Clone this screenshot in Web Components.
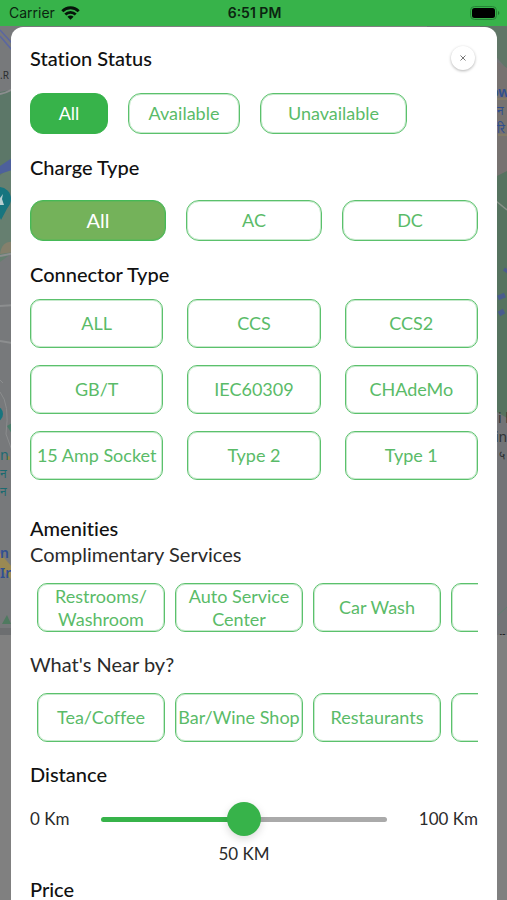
<!DOCTYPE html>
<html lang="en">
<head>
<meta charset="utf-8">
<meta name="viewport" content="width=device-width, initial-scale=1">
<title>Station filters</title>
<style>
	body {
		margin: 0;
		font-family: Lato, "Noto Sans", sans-serif;
		font-variant-ligatures: none;
		color: #111;
		background: #808080;
	}
</style>
</head>
<body>
<filter-screen></filter-screen>

<script>
function defineElement(name, html, setup) {
	const template = document.createElement('template');
	template.innerHTML = html;

	customElements.define(name, class extends HTMLElement {
		constructor() {
			super();
			const shadowRoot = this.attachShadow({ mode: "open" });
			shadowRoot.appendChild(template.content.cloneNode(true));
		}

		connectedCallback() {
			if (setup) setup(this, this.shadowRoot);
		}
	});
}

// green bar on top: carrier, clock, battery
defineElement('status-bar', `
<style>
	:host {
		display: grid;
		grid-template-columns: 1fr auto 1fr;
		align-items: center;
		height: 26px;
		padding: 0 7px 0 9px;
		background: #37b34a;
		color: #0b2410;
		font: 14px/26px Inter, sans-serif;
	}
	.carrier {
		display: flex;
		align-items: center;
		gap: 6px;
	}
	.time {
		font-weight: 600;
	}
	.battery {
		justify-self: end;
	}
	svg {
		display: block;
	}
</style>
<div class="carrier">
	<span>Carrier</span>
	<svg width="19" height="14" viewBox="0 0 19 14" fill="none" stroke="#06150a" stroke-width="2.8">
		<path d="M1.3 5.2C5.8 .6 13.2 .6 17.7 5.2"/>
		<path d="M4.3 8.5C7.2 5.6 11.8 5.6 14.7 8.5"/>
		<path d="M9.5 13.8 6.4 10.8C8.2 9.1 10.8 9.1 12.6 10.8Z" fill="#06150a" stroke="none"/>
	</svg>
</div>
<span class="time">6:51 PM</span>
<svg class="battery" width="30" height="14" viewBox="0 0 30 14">
	<rect x=".5" y=".5" width="26" height="13" rx="4" fill="none" stroke="#258436"/>
	<rect x="2" y="2" width="23" height="10" rx="2.5" fill="#000"/>
	<path d="M28 5v4c1.8-.6 1.8-3.4 0-4z" fill="#1f7a2d"/>
</svg>
`);

// the dimmed map that shows on both sides of the sheet
defineElement('map-backdrop', `
<style>
	:host {
		display: flex;
		justify-content: space-between;
		align-items: flex-start;
		background: #808080;
	}
	svg {
		display: block;
		font-family: "Noto Sans", sans-serif;
	}
</style>
<svg width="80" height="609" viewBox="0 26 80 609">
	<rect y="26" width="80" height="609" fill="#77797b"/>
	<path d="M0 92 30 86V150L0 176Z" fill="#5c7768"/>
	<path d="M0 176 30 146V240L0 262Z" fill="#667f70"/>
	<path d="M0 166 30 146V164L0 174Z" fill="#4d609c"/>
	<path d="M0 30 40 74M0 36 36 78" stroke="#5a66a2" stroke-width="1.5"/>
	<path d="M0 94Q12 92 20 82M0 256 30 250M0 306 30 304M0 341 30 346" stroke="#8c8e8f" fill="none" stroke-width="2"/>
	<path d="M0 254Q2 240 14 242V252Z" fill="#85806c"/>
	<circle cx="-1" cy="199" r="12" fill="#17757f"/>
	<path d="M-9 207Q0 217 1 220L9 205Z" fill="#17757f"/>
	<path d="M0 198 3 194 2 199 4 205H0Z" fill="#b8cfd2"/>
	<circle cx="-5" cy="414" r="8" fill="#17757f"/>
	<path d="M0 392Q10 404 6 434L14 456M0 380 3 383" stroke="#8b8d8e" fill="none"/>
	<path d="M7 426 12 423V434Z" fill="#4b7b69"/>
	<path d="M0 553 12 567V580L0 568Z" fill="#9a8953"/>
	<circle cx="8" cy="458" r="2" fill="#9a8147"/>
	<path d="M2 624 7 615 11 624Z" fill="#4f7a60"/>
	<rect y="628" width="80" height="7" fill="#6c6e70"/>
	<text x="0" y="79" font-size="10" fill="#2c2e30">.R</text>
	<text x="0" y="460" font-size="14" fill="#1c6a70">n</text>
	<text x="0" y="478" font-size="12" fill="#1c6a70">न</text>
	<text x="0" y="496" font-size="12" fill="#1c6a70">न</text>
	<text x="0" y="558" font-size="14" font-weight="600" fill="#314f91">n</text>
	<text x="0" y="578" font-size="14" font-weight="600" fill="#314f91">In</text>
</svg>
<svg width="80" height="609" viewBox="427 26 80 609">
	<rect x="427" y="26" width="80" height="609" fill="#737477"/>
	<path d="M480 26H507V70Q500 60 480 40Z" fill="#607667"/>
	<path d="M497 62 507 68V172L497 176Z" fill="#777270"/>
	<path d="M497 176 507 171V418L497 412Z" fill="#56735f"/>
	<path d="M496 201 507 210" stroke="#879187" stroke-width="1.5"/>
	<path d="M498 298 505 295M499 314 504 311M505 272 507 269" stroke="#4a5c8d" stroke-width="5"/>
	<path d="M498 615 507 607" stroke="#607f70"/>
	<path d="M497 99H507M498 135H507" stroke="#8e835d"/>
	<text x="490" y="97" font-size="14" font-weight="600" fill="#304f8f">ow</text>
	<text x="497" y="115" font-size="12" fill="#304f8f">न</text>
	<text x="497" y="133" font-size="12" fill="#304f8f">रि</text>
	<text x="498" y="423" font-size="14" fill="#303335">i l</text>
	<text x="495" y="442" font-size="14" fill="#303335">in</text>
	<text x="499" y="460" font-size="12" fill="#303335">५</text>
	<text x="499" y="642" font-size="14" font-weight="600" fill="#18191a">r</text>
</svg>
`);

// rounded toggle: variant attributes are "filled" and "muted"
defineElement('filter-chip', `
<style>
	:host {
		display: block;
		min-width: 0;
		--line: #5bc16c;
		--fill: #fff;
		--ink: #5abb68;
	}
	:host([filled]) {
		--line: #37b34a;
		--fill: #37b34a;
		--ink: #fff;
	}
	:host([muted]) {
		--line: #45b957;
		--fill: #74b25a;
		--ink: #fff;
		font-size: 20px;
	}
	button {
		display: block;
		box-sizing: border-box;
		width: 100%;
		height: var(--chip-height, 49px);
		padding: 0;
		border: 1px solid var(--line);
		outline: 1px solid color-mix(in srgb, var(--line) 35%, transparent);
		outline-offset: -2px;
		border-radius: var(--chip-radius, 10px);
		background: var(--fill);
		color: var(--ink);
		font: inherit;
		font-variant-ligatures: none;
		line-height: 23px;
		cursor: pointer;
	}
</style>
<button type="button"><slot></slot></button>
`, (host, root) => {
	const button = root.querySelector('button');
	button.setAttribute('aria-pressed', host.hasAttribute('filled') || host.hasAttribute('muted'));
	if (host.hasAttribute('label')) button.setAttribute('aria-label', host.getAttribute('label'));
});

// lays out the chips: layout is "status", "charge", "connector" or "scroll"
defineElement('chip-group', `
<style>
	:host {
		display: grid;
		grid-template-columns: repeat(3, 1fr);
		font-size: 18px;
	}
	:host([layout="status"]) {
		grid-template-columns: 78fr 112fr 147fr 51fr;
		gap: 20px;
		--chip-height: 41px;
		--chip-radius: 13px;
	}
	:host([layout="charge"]) {
		gap: 20px;
		--chip-height: 41px;
		--chip-radius: 13px;
	}
	:host([layout="connector"]) {
		gap: 17px 24px;
	}
	:host([layout="scroll"]) {
		grid-template-columns: none;
		grid-auto-flow: column;
		grid-auto-columns: 128px;
		gap: 10px;
		padding-left: 7px;
		overflow-x: auto;
		scrollbar-width: none;
	}
</style>
<slot></slot>
`);

defineElement('close-button', `
<style>
	:host {
		display: block;
	}
	button {
		display: grid;
		place-items: center;
		width: 24px;
		height: 24px;
		padding: 0;
		border: 0;
		border-radius: 50%;
		background: #fff;
		box-shadow: 0 1px 3px rgba(0, 0, 0, .3);
		cursor: pointer;
	}
</style>
<button type="button" aria-label="Close">
	<svg width="6" height="6" viewBox="0 0 6 6" stroke="#777" stroke-width="1">
		<path d="M.5 .5 5.5 5.5M5.5 .5 .5 5.5"/>
	</svg>
</button>
`);

defineElement('distance-slider', `
<style>
	:host {
		display: grid;
		grid-template-columns: 71px 1fr 91px;
		align-items: center;
		row-gap: 9px;
		color: #2b2b2b;
		font-size: 17px;
		line-height: 26px;
	}
	.max {
		text-align: right;
	}
	output {
		grid-column: 2;
		text-align: center;
	}
	input {
		appearance: none;
		width: 100%;
		height: 26px;
		margin: 0;
		background: transparent;
	}
	input::-webkit-slider-runnable-track {
		height: 5px;
		border-radius: 3px;
		background: linear-gradient(to right, #37b34a var(--value, 50%), #aaa var(--value, 50%));
	}
	input::-webkit-slider-thumb {
		appearance: none;
		width: 34px;
		height: 34px;
		margin-top: -15px;
		border-radius: 50%;
		background: #37b34a;
		box-shadow: 0 3px 8px rgba(0, 0, 0, .15);
	}
</style>
<span>0 Km</span>
<input id="distance" type="range" min="0" max="100" value="50" aria-label="Distance">
<span class="max">100 Km</span>
<output for="distance">50 KM</output>
`, (host, root) => {
	const input = root.querySelector('input');
	input.addEventListener('input', () => {
		input.style.setProperty('--value', input.value + '%');
		root.querySelector('output').textContent = input.value + ' KM';
	});
});

defineElement('filter-screen', `
<style>
	:host {
		display: grid;
		grid-template-rows: auto 1fr;
		height: 100vh;
		overflow: hidden;
	}
	status-bar {
		grid-area: 1 / 1;
	}
	map-backdrop, main {
		grid-area: 2 / 1;
		min-height: 0;
	}
	main {
		display: flex;
		flex-direction: column;
		z-index: 1;
		margin: 1px 10px 0 11px;
		padding: 18px 19px 0;
		overflow-y: auto;
		scrollbar-width: none;
		border-radius: 12px 12px 0 0;
		background: #fff;
	}
	main > * {
		flex: none;
	}
	header {
		display: flex;
		justify-content: space-between;
		align-items: center;
		padding-right: 3px;
	}
	h2, h3 {
		margin: 0;
		font-size: 20px;
		font-weight: 500;
		line-height: 26px;
	}
	h3 {
		font-weight: 400;
		color: #2b2b2b;
	}
	chip-group {
		margin: 20px 0;
	}
	chip-group[layout="status"] {
		margin-top: 22px;
	}
	chip-group[layout="connector"] {
		margin: 12px 0 35px;
	}
	chip-group[layout="scroll"] {
		margin: 16px 0 19px;
	}
	distance-slider {
		margin: 19px 0 9px;
	}
</style>
<status-bar></status-bar>
<map-backdrop aria-hidden="true"></map-backdrop>
<main>
	<header>
		<h2>Station Status</h2>
		<close-button></close-button>
	</header>
	<chip-group layout="status">
		<filter-chip filled>All</filter-chip>
		<filter-chip>Available</filter-chip>
		<filter-chip>Unavailable</filter-chip>
	</chip-group>
	<h2>Charge Type</h2>
	<chip-group layout="charge">
		<filter-chip muted>All</filter-chip>
		<filter-chip>AC</filter-chip>
		<filter-chip>DC</filter-chip>
	</chip-group>
	<h2>Connector Type</h2>
	<chip-group layout="connector">
		<filter-chip>ALL</filter-chip>
		<filter-chip>CCS</filter-chip>
		<filter-chip>CCS2</filter-chip>
		<filter-chip>GB/T</filter-chip>
		<filter-chip>IEC60309</filter-chip>
		<filter-chip>CHAdeMo</filter-chip>
		<filter-chip>15 Amp Socket</filter-chip>
		<filter-chip>Type 2</filter-chip>
		<filter-chip>Type 1</filter-chip>
	</chip-group>
	<h2>Amenities</h2>
	<h3>Complimentary Services</h3>
	<chip-group layout="scroll">
		<filter-chip>Restrooms/<br>Washroom</filter-chip>
		<filter-chip>Auto Service<br>Center</filter-chip>
		<filter-chip>Car Wash</filter-chip>
		<filter-chip label="More services"></filter-chip>
	</chip-group>
	<h3>What's Near by?</h3>
	<chip-group layout="scroll">
		<filter-chip>Tea/Coffee</filter-chip>
		<filter-chip>Bar/Wine Shop</filter-chip>
		<filter-chip>Restaurants</filter-chip>
		<filter-chip label="More places"></filter-chip>
	</chip-group>
	<h2>Distance</h2>
	<distance-slider></distance-slider>
	<h2>Price</h2>
</main>
`);
</script>
</body>
</html>
